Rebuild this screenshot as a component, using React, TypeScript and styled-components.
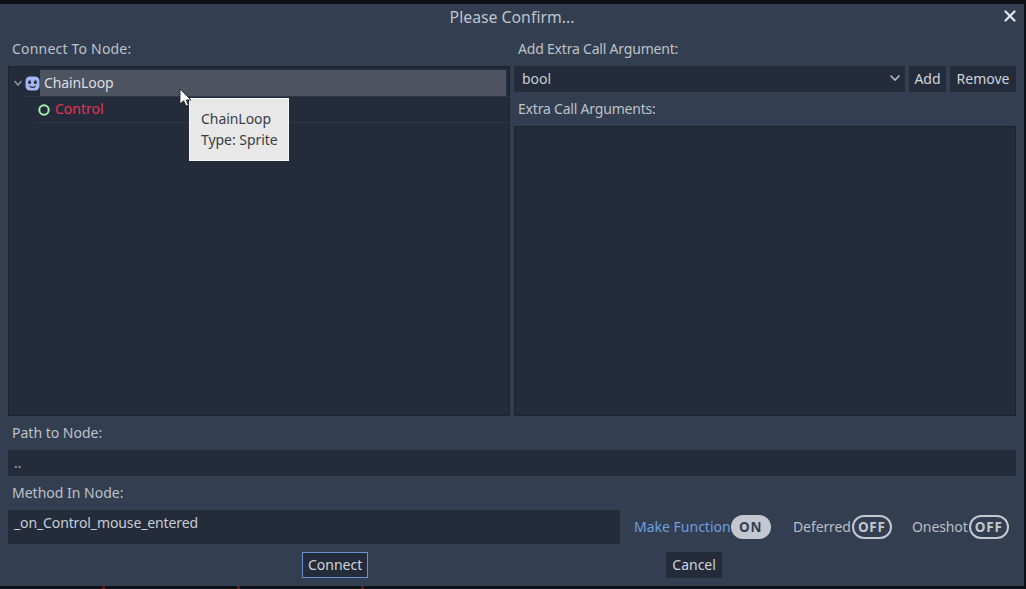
import React from 'react';
import styled, { createGlobalStyle } from 'styled-components';

const GlobalStyle = createGlobalStyle`
  html, body { margin: 0; padding: 0; background: #0d1016; }
  body { font-family: "Noto Sans", "Liberation Sans", sans-serif; font-size: 14px; color: #cfd3da; }
`;

const Screen = styled.div`
  position: relative;
  width: 1026px;
  height: 589px;
  padding-top: 4px;
  box-sizing: border-box;
  overflow: hidden;
  background: #0d1016;
`;

const Dialog = styled.div`
  width: 1024px;
  height: 582px;
  background: #333e50;
  box-sizing: border-box;
  padding: 0 8px;
  display: flex;
  flex-direction: column;
`;

const TitleBar = styled.div`
  position: relative;
  height: 27px;
  line-height: 26px;
  text-align: center;
  font-size: 15.8px;
  color: #bfc4cc;
`;

const CloseIcon = styled.svg`
  position: absolute;
  right: 0;
  top: 6px;
  width: 12px;
  height: 12px;
`;

const Columns = styled.div`
  display: flex;
  gap: 4px;
  height: 385px;
`;

const Column = styled.div`
  width: 502px;
  display: flex;
  flex-direction: column;
`;

const Label = styled.div<{ $h?: number; $lh?: number; $ls?: number }>`
  height: ${(p) => p.$h ?? 35}px;
  line-height: ${(p) => p.$lh ?? p.$h ?? 35}px;
  padding-left: 4px;
  letter-spacing: ${(p) => p.$ls ?? 0}px;
  color: #bdc2ca;
  white-space: nowrap;
`;

const Tree = styled.div`
  flex: 1;
  background: #242c3c;
  border: 1px solid #1b2230;
  box-sizing: border-box;
  padding-top: 3px;
`;

const TreeRow = styled.div<{ $indent: number }>`
  display: flex;
  padding-left: ${(p) => p.$indent}px;
`;

const Arrow = styled.svg`
  flex: none;
  width: 11px;
  height: 26px;
`;

const RowBody = styled.div<{ $h: number; $pad: number }>`
  flex: 1;
  height: ${(p) => p.$h}px;
  display: flex;
  align-items: center;
  padding: 0 3px 0 ${(p) => p.$pad}px;
  border-bottom: 1px solid #2d3747;
`;

const NodeName = styled.span<{ $selected?: boolean; $error?: boolean }>`
  flex: 1;
  height: 100%;
  box-sizing: border-box;
  display: flex;
  align-items: center;
  padding: 0 0 2px ${(p) => (p.$error ? 5 : 4)}px;
  letter-spacing: ${(p) => (p.$error ? 0 : -0.1)}px;
  color: ${(p) => (p.$error ? '#e6334f' : '#dcdfe4')};
  background: ${(p) => (p.$selected ? '#4d535f' : 'transparent')};
`;

const ArgBar = styled.div`
  display: flex;
  gap: 4px;
  height: 26px;
`;

const Select = styled.div`
  flex: 1;
  display: flex;
  align-items: center;
  justify-content: space-between;
  padding: 0 4px 2px 8px;
  box-sizing: border-box;
  background: #242c3c;
  color: #c8ccd3;
`;

const Button = styled.div<{ $focus?: boolean }>`
  height: 26px;
  box-sizing: border-box;
  padding: 0 ${(p) => (p.$focus ? 5 : 6)}px;
  line-height: ${(p) => (p.$focus ? 24 : 26)}px;
  background: #242c3c;
  color: #cfd3da;
  border: ${(p) => (p.$focus ? '1px solid #6d93cf' : 'none')};
`;

const ArgButton = styled(Button)<{ $w: number }>`
  width: ${(p) => p.$w}px;
  padding: 0;
  text-align: center;
  line-height: 25px;
`;

const ArgList = styled.div`
  flex: 1;
  background: #242c3c;
  border: 1px solid #1b2230;
`;

const PathInput = styled.div`
  height: 26px;
  line-height: 25px;
  padding-left: 6px;
  background: #242c3c;
  color: #a9afb9;
`;

const MethodRow = styled.div`
  display: flex;
  align-items: center;
  height: 34px;
`;

const MethodInput = styled.div`
  width: 612px;
  height: 34px;
  line-height: 26px;
  padding-left: 6px;
  box-sizing: border-box;
  letter-spacing: -0.12px;
  background: #242c3c;
  color: #c8ccd3;
`;

const Toggles = styled.div`
  display: flex;
  align-items: center;
  margin-left: 14px;
`;

const Toggle = styled.div<{ $w: number }>`
  width: ${(p) => p.$w}px;
  display: flex;
  align-items: center;
`;

const ToggleLabel = styled.span<{ $active?: boolean }>`
  padding-bottom: 1px;
  color: ${(p) => (p.$active ? '#6d9ee0' : '#b9bec7')};
  white-space: nowrap;
  letter-spacing: ${(p) => (p.$active ? 0 : -0.1)}px;
`;

const Pill = styled.span<{ $on?: boolean }>`
  width: 40px;
  height: 24px;
  margin-left: ${(p) => (p.$on ? 0 : 1)}px;
  box-sizing: border-box;
  border-radius: 12px;
  border: 2px solid #c3c7cf;
  background: ${(p) => (p.$on ? '#c3c7cf' : 'transparent')};
  color: ${(p) => (p.$on ? '#333e50' : '#c3c7cf')};
  font-size: 13.5px;
  font-weight: 700;
  letter-spacing: 0.8px;
  line-height: 20px;
  text-align: center;
`;

const Footer = styled.div`
  display: flex;
  height: 26px;
  margin-top: 8px;
  padding-left: 294px;
  gap: 298px;
`;

const Tooltip = styled.div`
  position: absolute;
  left: 189px;
  top: 98px;
  width: 100px;
  height: 63px;
  box-sizing: border-box;
  padding: 9px 0 0 11px;
  background: #e8e8e8;
  border: 1px solid #f8f8f8;
  color: #3a3d44;
  line-height: 21px;
  letter-spacing: -0.05px;
`;

const Cursor = styled.svg`
  position: absolute;
  left: 179px;
  top: 88px;
  width: 13px;
  height: 20px;
`;

const Tick = styled.span<{ $x: number }>`
  position: absolute;
  left: ${(p) => p.$x}px;
  bottom: 0;
  width: 3px;
  height: 3px;
  background: #5a1a22;
`;

export default function App() {
  return (
    <Screen>
      <GlobalStyle />
      <Dialog>
        <TitleBar>
          Please Confirm...
          <CloseIcon viewBox="0 0 12 12">
            <path d="M1.5 1.5L10.5 10.5M10.5 1.5L1.5 10.5" stroke="#e4e6ea" strokeWidth="2.2" strokeLinecap="round" />
          </CloseIcon>
        </TitleBar>
        <Columns>
          <Column>
            <Label $ls={0.2}>Connect To Node:</Label>
            <Tree>
              <TreeRow $indent={4}>
                <Arrow viewBox="0 0 11 26">
                  <path d="M1.5 11L5 15L8.5 11" fill="none" stroke="#8a909b" strokeWidth="1.6" />
                </Arrow>
                <RowBody $h={26} $pad={1}>
                  <svg width="15" height="15" viewBox="0 0 15 15">
                    <rect x="0.5" y="0.5" width="14" height="14" rx="4.5" fill="#a5b7f3" />
                    <ellipse cx="4.6" cy="6.2" rx="1.5" ry="2" fill="#2b3245" />
                    <ellipse cx="10.4" cy="6.2" rx="1.5" ry="2" fill="#2b3245" />
                    <path d="M4.5 10.2Q7.5 12.6 10.5 10.2" fill="none" stroke="#2b3245" strokeWidth="1.2" />
                  </svg>
                  <NodeName $selected>ChainLoop</NodeName>
                </RowBody>
              </TreeRow>
              <TreeRow $indent={27}>
                <RowBody $h={25} $pad={2}>
                  <svg width="12" height="12" viewBox="0 0 12 12">
                    <circle cx="6" cy="6" r="4.7" fill="none" stroke="#a5efac" strokeWidth="2" />
                  </svg>
                  <NodeName $error>Control</NodeName>
                </RowBody>
              </TreeRow>
            </Tree>
          </Column>
          <Column>
            <Label $ls={-0.2}>Add Extra Call Argument:</Label>
            <ArgBar>
              <Select>
                bool
                <svg width="12" height="8" viewBox="0 0 12 8">
                  <path d="M1.5 1.5L6 6L10.5 1.5" fill="none" stroke="#b4b9c2" strokeWidth="1.6" />
                </svg>
              </Select>
              <ArgButton $w={37}>Add</ArgButton>
              <ArgButton $w={66}>Remove</ArgButton>
            </ArgBar>
            <Label $h={34} $ls={-0.2}>Extra Call Arguments:</Label>
            <ArgList />
          </Column>
        </Columns>
        <Label $h={34} $lh={33}>Path to Node:</Label>
        <PathInput>..</PathInput>
        <Label $h={34} $lh={33}>Method In Node:</Label>
        <MethodRow>
          <MethodInput>_on_Control_mouse_entered</MethodInput>
          <Toggles>
            <Toggle $w={159}>
              <ToggleLabel $active>Make Function</ToggleLabel>
              <Pill $on>ON</Pill>
            </Toggle>
            <Toggle $w={119}>
              <ToggleLabel>Deferred</ToggleLabel>
              <Pill>OFF</Pill>
            </Toggle>
            <Toggle $w={100}>
              <ToggleLabel>Oneshot</ToggleLabel>
              <Pill>OFF</Pill>
            </Toggle>
          </Toggles>
        </MethodRow>
        <Footer>
          <Button $focus>Connect</Button>
          <Button>Cancel</Button>
        </Footer>
      </Dialog>
      <Tick $x={102} />
      <Tick $x={237} />
      <Tick $x={361} />
      <Tooltip>
        ChainLoop
        <br />
        Type: Sprite
      </Tooltip>
      <Cursor viewBox="0 0 13 20">
        <path d="M1 1V16L4.6 12.8L7 18L9.5 17L7.2 12H12Z" fill="#fff" stroke="#1a1a1a" strokeWidth="0.8" />
      </Cursor>
    </Screen>
  );
}
